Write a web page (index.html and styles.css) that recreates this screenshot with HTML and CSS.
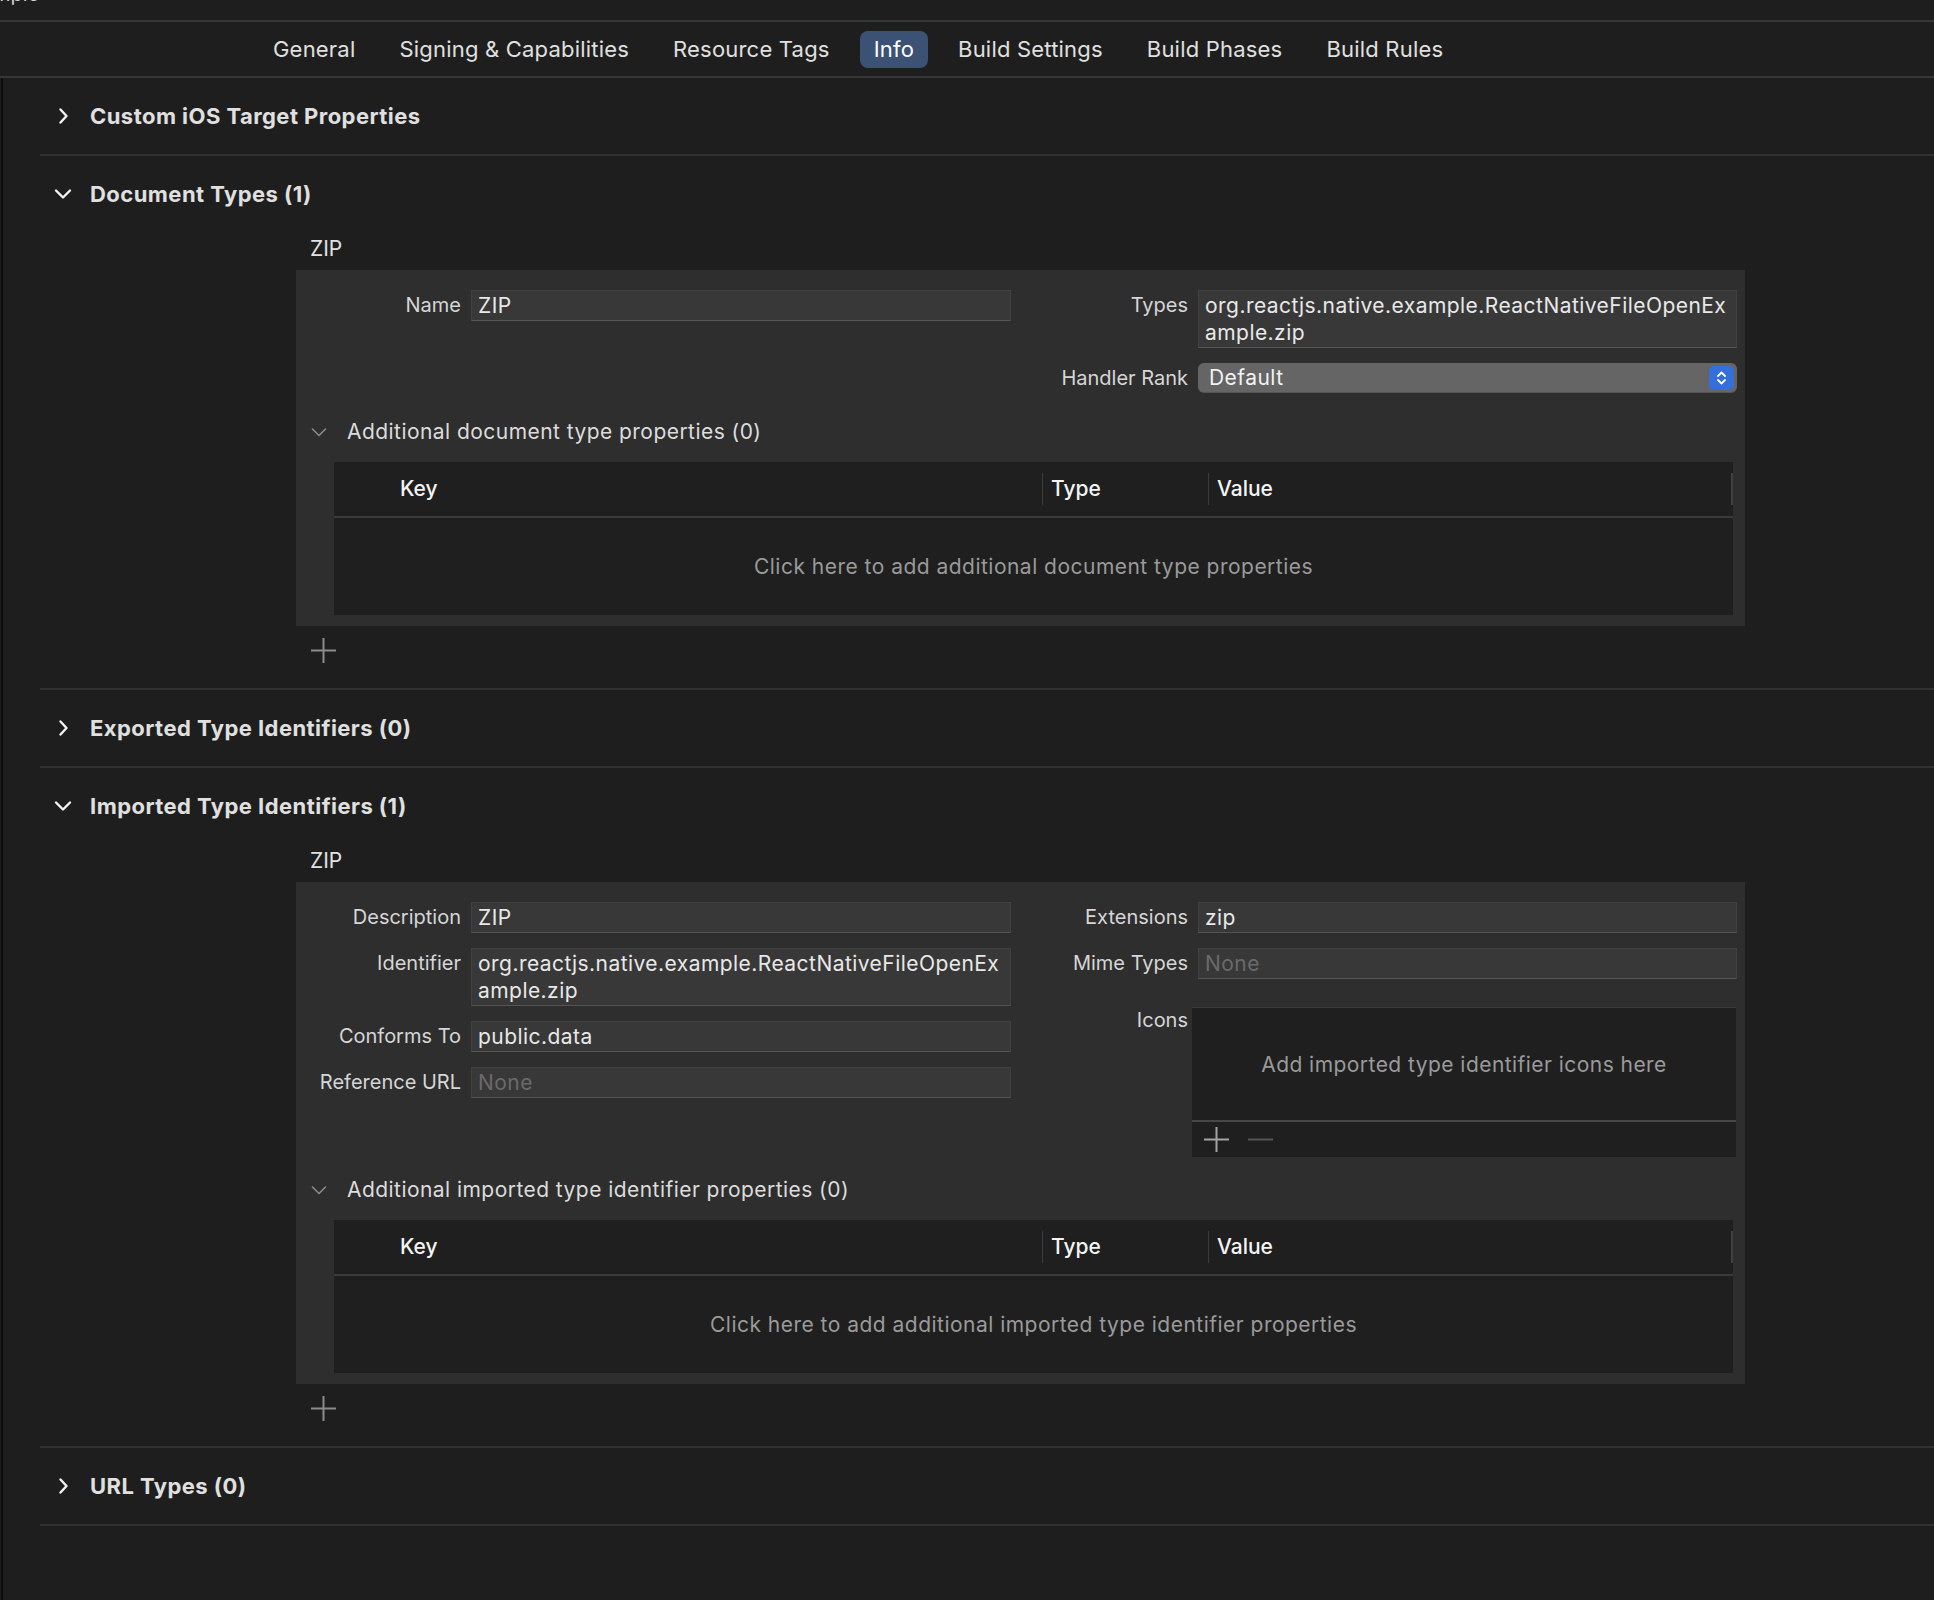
FILE: index.html
```html
<!DOCTYPE html>
<html lang="en">
<head>
<meta charset="utf-8">
<title>Info</title>
<link rel="stylesheet" href="styles.css">
</head>
<body>
<div class="topstrip"><span class="crumb">mple</span></div>
<nav class="tabs">
  <span class="tab">General</span>
  <span class="tab">Signing &amp; Capabilities</span>
  <span class="tab">Resource Tags</span>
  <span class="tab active">Info</span>
  <span class="tab">Build Settings</span>
  <span class="tab">Build Phases</span>
  <span class="tab">Build Rules</span>
</nav>
<main class="content">

  <section class="sec">
    <div class="sec-head">
      <span class="chev"><svg width="12" height="18" viewBox="0 0 12 18"><polyline points="3.5,2.5 9.5,9 3.5,15.5" fill="none" stroke="#f2f2f2" stroke-width="2.4" stroke-linecap="round" stroke-linejoin="round"/></svg></span>
      <span class="sec-title">Custom iOS Target Properties</span>
    </div>
  </section>

  <section class="sec sec-open">
    <div class="sec-head">
      <span class="chev"><svg width="18" height="12" viewBox="0 0 18 12"><polyline points="2,2.5 9,9.5 16,2.5" fill="none" stroke="#f2f2f2" stroke-width="2.4" stroke-linecap="round" stroke-linejoin="round"/></svg></span>
      <span class="sec-title">Document Types (1)</span>
    </div>
    <div class="entry">
      <div class="entry-title">ZIP</div>
      <div class="panel">
        <div class="cols">
          <div class="col col-left">
            <div class="lbl">Name</div>
            <div class="field">ZIP</div>
          </div>
          <div class="col col-right">
            <div class="lbl">Types</div>
            <div class="field">org.reactjs.native.example.ReactNativeFileOpenEx<br>ample.zip</div>
            <div class="lbl">Handler Rank</div>
            <div class="select">
              <span>Default</span>
              <span class="stepper"><svg width="25" height="24" viewBox="0 0 25 24"><polyline points="9,10 12.5,6.5 16,10" fill="none" stroke="#ffffff" stroke-width="1.8" stroke-linecap="round" stroke-linejoin="round"/><polyline points="9,14 12.5,17.5 16,14" fill="none" stroke="#ffffff" stroke-width="1.8" stroke-linecap="round" stroke-linejoin="round"/></svg></span>
            </div>
          </div>
        </div>
        <div class="disclosure">
          <svg width="16" height="10" viewBox="0 0 16 10"><polyline points="1.5,2 8,8.5 14.5,2" fill="none" stroke="#8a8a8a" stroke-width="1.6" stroke-linecap="round" stroke-linejoin="round"/></svg>
          <span>Additional document type properties (0)</span>
        </div>
        <div class="kv-table">
          <div class="kv-head">
            <div class="kv-col kv-key">Key</div>
            <div class="kv-col kv-type">Type</div>
            <div class="kv-col kv-value">Value</div>
          </div>
          <div class="kv-body">Click here to add additional document type properties</div>
        </div>
      </div>
      <div class="add"><svg width="27" height="27" viewBox="0 0 27 27"><path d="M13.5 1V26M1 13.5H26" stroke="#8c8c8c" stroke-width="2" fill="none"/></svg></div>
    </div>
  </section>

  <section class="sec">
    <div class="sec-head">
      <span class="chev"><svg width="12" height="18" viewBox="0 0 12 18"><polyline points="3.5,2.5 9.5,9 3.5,15.5" fill="none" stroke="#f2f2f2" stroke-width="2.4" stroke-linecap="round" stroke-linejoin="round"/></svg></span>
      <span class="sec-title">Exported Type Identifiers (0)</span>
    </div>
  </section>

  <section class="sec sec-open">
    <div class="sec-head">
      <span class="chev"><svg width="18" height="12" viewBox="0 0 18 12"><polyline points="2,2.5 9,9.5 16,2.5" fill="none" stroke="#f2f2f2" stroke-width="2.4" stroke-linecap="round" stroke-linejoin="round"/></svg></span>
      <span class="sec-title">Imported Type Identifiers (1)</span>
    </div>
    <div class="entry">
      <div class="entry-title">ZIP</div>
      <div class="panel">
        <div class="cols">
          <div class="col col-left">
            <div class="lbl">Description</div>
            <div class="field">ZIP</div>
            <div class="lbl">Identifier</div>
            <div class="field">org.reactjs.native.example.ReactNativeFileOpenEx<br>ample.zip</div>
            <div class="lbl">Conforms To</div>
            <div class="field">public.data</div>
            <div class="lbl">Reference URL</div>
            <div class="field field-empty">None</div>
          </div>
          <div class="col col-right">
            <div class="lbl">Extensions</div>
            <div class="field">zip</div>
            <div class="lbl">Mime Types</div>
            <div class="field field-empty">None</div>
            <div class="lbl lbl-icons">Icons</div>
            <div class="icons-box">
              <div class="icons-drop">Add imported type identifier icons here</div>
              <div class="icons-bar">
                <svg width="27" height="27" viewBox="0 0 27 27"><path d="M13.5 1V26M1 13.5H26" stroke="#a3a3a3" stroke-width="2" fill="none"/></svg>
                <svg width="27" height="27" viewBox="0 0 27 27"><path d="M1 13.5H26" stroke="#555555" stroke-width="2" fill="none"/></svg>
              </div>
            </div>
          </div>
        </div>
        <div class="disclosure disclosure-tight">
          <svg width="16" height="10" viewBox="0 0 16 10"><polyline points="1.5,2 8,8.5 14.5,2" fill="none" stroke="#8a8a8a" stroke-width="1.6" stroke-linecap="round" stroke-linejoin="round"/></svg>
          <span>Additional imported type identifier properties (0)</span>
        </div>
        <div class="kv-table">
          <div class="kv-head">
            <div class="kv-col kv-key">Key</div>
            <div class="kv-col kv-type">Type</div>
            <div class="kv-col kv-value">Value</div>
          </div>
          <div class="kv-body">Click here to add additional imported type identifier properties</div>
        </div>
      </div>
      <div class="add"><svg width="27" height="27" viewBox="0 0 27 27"><path d="M13.5 1V26M1 13.5H26" stroke="#8c8c8c" stroke-width="2" fill="none"/></svg></div>
    </div>
  </section>

  <section class="sec">
    <div class="sec-head">
      <span class="chev"><svg width="12" height="18" viewBox="0 0 12 18"><polyline points="3.5,2.5 9.5,9 3.5,15.5" fill="none" stroke="#f2f2f2" stroke-width="2.4" stroke-linecap="round" stroke-linejoin="round"/></svg></span>
      <span class="sec-title">URL Types (0)</span>
    </div>
  </section>

</main>
</body>
</html>
```

FILE: styles.css
```css
* { box-sizing: border-box; }

html, body {
  margin: 0;
  padding: 0;
  background: #1e1e1e;
}

body {
  width: 1934px;
  height: 1600px;
  overflow: hidden;
  font-family: Inter, "Noto Sans", "Liberation Sans", sans-serif;
  font-size: 20px;
  color: #dedede;
}

/* ---------- top strip and tab bar ---------- */
.topstrip {
  height: 22px;
  border-bottom: 2px solid #363636;
  overflow: hidden;
}

.crumb {
  display: block;
  margin-top: -16px;
  margin-left: -7px;
  line-height: 20px;
  font-size: 20px;
  color: #d0d0d0;
}

.tabs {
  display: flex;
  align-items: center;
  gap: 16px;
  height: 56px;
  padding-left: 259px;
  border-bottom: 2px solid #363636;
}

.tab {
  height: 37px;
  line-height: 37px;
  padding: 0 14px;
  border-radius: 8px;
  font-size: 22px;
  letter-spacing: 0.2px;
  color: #e0e0e0;
  white-space: nowrap;
}

.tab.active {
  background: #3c5275;
  color: #ffffff;
}

/* ---------- content ---------- */
.content {
  margin-left: 1px;
  border-left: 2px solid #0b0b0b;
  height: 1522px;
}

.sec {
  margin-left: 37px;
  border-bottom: 2px solid #313131;
}

.sec-head {
  display: flex;
  align-items: center;
  gap: 17px;
  height: 76px;
  padding-left: 13px;
}

.chev {
  display: flex;
  align-items: center;
  justify-content: center;
  width: 20px;
  height: 20px;
}

.sec-title {
  font-size: 22px;
  letter-spacing: 0.45px;
  font-weight: 700;
  color: #e0e0e0;
}

.sec-open {
  padding-bottom: 24px;
}

.entry {
  margin-left: 256px;
  width: 1449px;
}

.entry-title {
  padding: 4px 0 0 14px;
  line-height: 26px;
  margin-bottom: 8px;
  font-size: 21px;
  color: #e2e2e2;
}

/* ---------- panel ---------- */
.panel {
  background: #2e2e2e;
  padding: 20px 8px 11px 10px;
}

.cols {
  display: flex;
  gap: 10px;
  align-items: flex-start;
}

.col {
  display: grid;
  column-gap: 10px;
  row-gap: 15px;
  align-items: start;
}

.col-left { grid-template-columns: 155px 540px; }
.col-right { grid-template-columns: 167px 539px; }

.lbl {
  text-align: right;
  padding-top: 2px;
  line-height: 27px;
  color: #d6d6d6;
  white-space: nowrap;
}

.lbl-icons {
  margin-top: 13px;
  padding-top: 0;
}

.field {
  background: #383838;
  border: 1px solid #414141;
  border-bottom-color: #545454;
  padding: 1px 6px;
  line-height: 27px;
  font-size: 21px;
  letter-spacing: 0.45px;
  color: #e8e8e8;
  white-space: nowrap;
  overflow: hidden;
}

.field-empty { color: #6a6a6a; }

.select {
  display: flex;
  align-items: center;
  justify-content: space-between;
  height: 29px;
  padding: 0 3px 0 11px;
  background: #656565;
  border-radius: 6px;
  font-size: 21px;
  letter-spacing: 0.45px;
  color: #f2f2f2;
  box-shadow: 0 1px 0 #565656;
}

.stepper {
  display: flex;
  width: 25px;
  height: 24px;
  border-radius: 5px;
  background: #346fdc;
}

.icons-box {
  margin: 13px 1px 0 -6px;
  background: #1f1f1f;
  border-top: 1px solid #3a3a3a;
}

.icons-drop {
  height: 114px;
  display: flex;
  align-items: center;
  justify-content: center;
  font-size: 21px;
  letter-spacing: 0.45px;
  color: #9a9a9a;
  border-bottom: 2px solid #474747;
}

.icons-bar {
  height: 35px;
  display: flex;
  align-items: center;
  gap: 17px;
  padding-left: 11px;
}

.disclosure {
  display: flex;
  align-items: center;
  gap: 20px;
  margin-top: 26px;
  padding-left: 5px;
  line-height: 27px;
  font-size: 21px;
  letter-spacing: 0.45px;
  color: #dcdcdc;
}

.disclosure-tight { margin-top: 19px; }

/* ---------- key / value table ---------- */
.kv-table {
  margin: 17px 4px 0 28px;
  background: #1f1f1f;
}

.kv-head {
  display: grid;
  grid-template-columns: 708px 166px 1fr;
  padding: 11px 0;
  border-bottom: 2px solid #3a3a3a;
}

.kv-col {
  line-height: 32px;
  padding-left: 8px;
  font-size: 21px;
  font-weight: 500;
  color: #f4f4f4;
}

.kv-key { padding-left: 66px; }
.kv-type, .kv-value { border-left: 1px solid #3b3b3b; }
.kv-value { border-right: 2px solid #404040; }

.kv-body {
  height: 97px;
  display: flex;
  align-items: center;
  justify-content: center;
  font-size: 21px;
  letter-spacing: 0.48px;
  color: #9a9a9a;
}

.add {
  display: flex;
  margin: 11px 0 0 14px;
  width: 27px;
  height: 27px;
}
```
